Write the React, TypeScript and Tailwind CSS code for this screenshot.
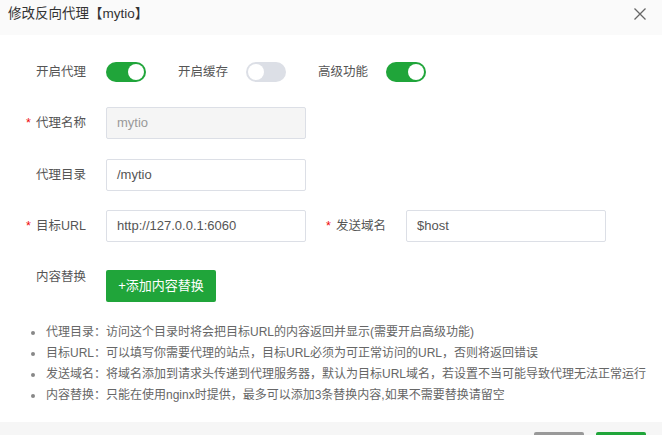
import React from 'react';

const font = { fontFamily: '"Liberation Sans", "Noto Sans CJK SC", sans-serif' };

const Toggle = ({ on }: { on: boolean }) => (
  <div
    className={`flex h-[20px] w-[40px] shrink-0 items-center rounded-full px-[2px] ${
      on ? 'justify-end bg-[#20a53a]' : 'justify-start bg-[#dcdfe6]'
    }`}
  >
    <div className="h-[16px] w-[16px] rounded-full bg-white" />
  </div>
);

const Label = ({
  children,
  required,
  className = 'w-[106px]'
}: {
  children: React.ReactNode;
  required?: boolean;
  className?: string;
}) => (
  <div className={`${className} shrink-0 pr-5 text-right text-[12.5px] text-[#555] whitespace-nowrap`}>
    {required && <span className="mr-[5px] text-[#ef0808]">*</span>}
    {children}
  </div>
);

const Input = ({ value, disabled }: { value: string; disabled?: boolean }) => (
  <div
    className={`flex h-[32px] w-[200px] shrink-0 items-center rounded-[2px] border border-[#dcdfe6] px-[10px] text-[13px] ${
      disabled ? 'bg-[#f5f5f5] text-[#999]' : 'bg-white text-[#555]'
    }`}
  >
    {value}
  </div>
);

const notes = [
  '代理目录：访问这个目录时将会把目标URL的内容返回并显示(需要开启高级功能)',
  '目标URL：可以填写你需要代理的站点，目标URL必须为可正常访问的URL，否则将返回错误',
  '发送域名：将域名添加到请求头传递到代理服务器，默认为目标URL域名，若设置不当可能导致代理无法正常运行',
  '内容替换：只能在使用nginx时提供，最多可以添加3条替换内容,如果不需要替换请留空'
];

export default function App() {
  return (
    <div className="flex h-[435px] w-[662px] flex-col overflow-hidden bg-white" style={font}>
      <div className="flex h-[35px] shrink-0 items-start justify-between bg-[#fafafa] pl-2 pr-[16px] pt-[4px]">
        <span className="text-[13.5px] leading-[20px] text-[#333]">修改反向代理【mytio】</span>
        <svg width="12" height="12" viewBox="0 0 12 12" className="mt-[4px]">
          <path d="M0.5 0.5 L11.5 11.5 M11.5 0.5 L0.5 11.5" stroke="#666" strokeWidth="1.3" fill="none" />
        </svg>
      </div>

      <div className="flex h-[387px] shrink-0 flex-col pt-[21px]">
        <div className="flex h-[32px] items-center">
          <Label>开启代理</Label>
          <Toggle on />
          <div className="ml-[32px] w-[50px] text-[12.5px] text-[#555] whitespace-nowrap">开启缓存</div>
          <div className="ml-[18px]">
            <Toggle on={false} />
          </div>
          <div className="ml-[32px] w-[50px] text-[12.5px] text-[#555] whitespace-nowrap">高级功能</div>
          <div className="ml-[18px]">
            <Toggle on />
          </div>
        </div>

        <div className="mt-[19px] flex items-center">
          <Label required>代理名称</Label>
          <Input value="mytio" disabled />
        </div>

        <div className="mt-[20px] flex items-center">
          <Label>代理目录</Label>
          <Input value="/mytio" />
        </div>

        <div className="mt-[19px] flex items-center">
          <Label required>目标URL</Label>
          <Input value="http://127.0.0.1:6060" />
          <Label required className="w-[100px]">
            发送域名
          </Label>
          <Input value="$host" />
        </div>

        <div className="mt-[28px] flex items-start">
          <Label className="w-[106px] leading-[14px]">内容替换</Label>
          <button className="flex h-[32px] w-[110px] items-center justify-center rounded-[2px] bg-[#20a53a] text-[13px] text-white">
            +添加内容替换
          </button>
        </div>

        <ul className="mt-[20px] flex flex-col">
          {notes.map(note => (
            <li key={note} className="flex items-center pl-[31px] text-[12px] leading-[21px] text-[#666] whitespace-nowrap">
              <span className="mr-[11px] h-[4px] w-[4px] shrink-0 rounded-full bg-[#888]" />
              {note}
            </li>
          ))}
        </ul>
      </div>

      <div className="flex flex-1 items-start justify-end gap-[12px] bg-[#f6f6f6] pr-[16px] pt-[10px]">
        <button aria-label="关闭" className="h-[30px] w-[50px] rounded-[2px] bg-[#999]" />
        <button aria-label="保存" className="h-[30px] w-[50px] rounded-[2px] bg-[#20a53a]" />
      </div>
    </div>
  );
}
